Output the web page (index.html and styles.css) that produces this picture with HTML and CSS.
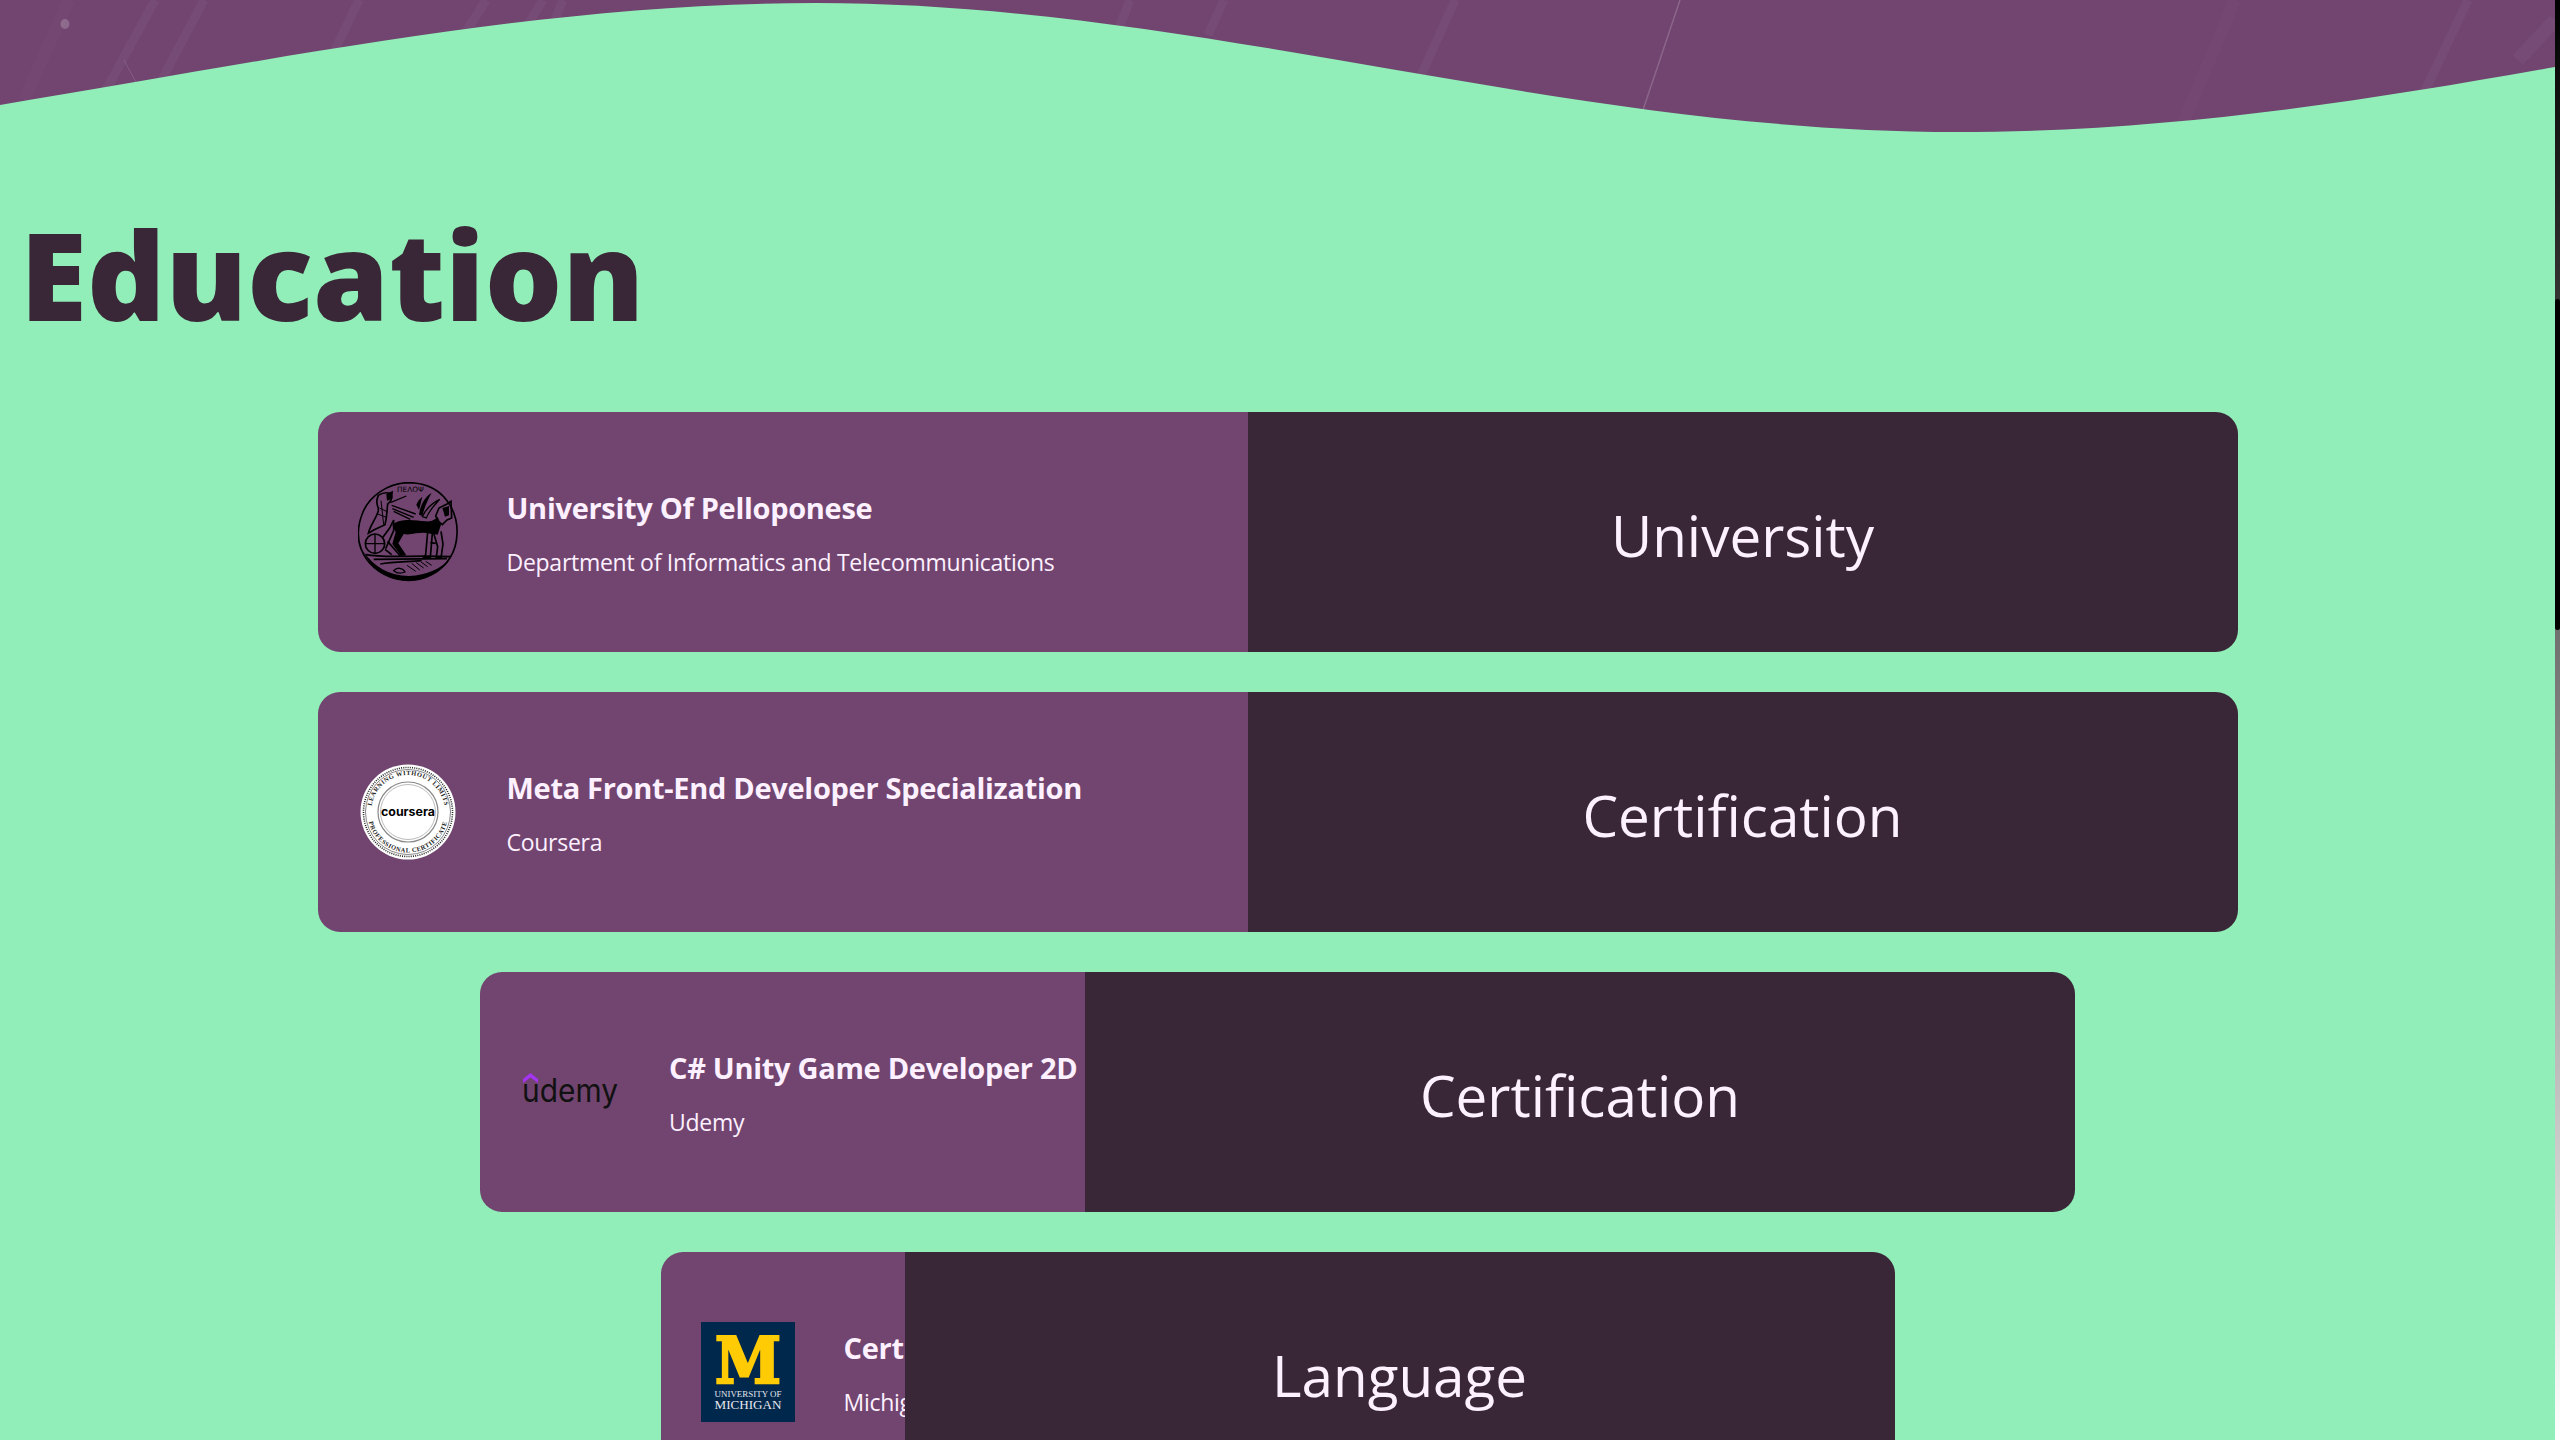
FILE: index.html
```html
<!DOCTYPE html>
<html lang="en">
<head>
  <meta charset="UTF-8">
  <meta name="viewport" content="width=device-width, initial-scale=1.0">
  <title>Education</title>
  <link rel="stylesheet" href="styles.css">
</head>
<body>
  <main class="page">
    <!-- top wave, streaks sit under the green shape -->
    <svg class="wave" viewBox="0 0 2555 140" preserveAspectRatio="none">
      <rect width="2555" height="140" fill="#714570"/>
      <g stroke="#fff" stroke-opacity="0.035" stroke-width="9">
        <path d="M155 0 L106 90"/>
        <path d="M204 0 L159 85"/>
        <path d="M359 0 L330 60"/>
        <path d="M486 0 L461 40"/>
        <path d="M543 0 L522 35"/>
        <path d="M563 0 L555 20"/>
        <path d="M1130 0 L1118 30"/>
        <path d="M1224 0 L1208 35"/>
        <path d="M1455 0 L1419 80"/>
        <path d="M2468 0 L2423 95"/>
        <path d="M2555 20 L2518 60" stroke-width="14"/>
      </g>
      <g stroke="#fff" stroke-opacity="0.015" stroke-width="12">
        <path d="M69 0 L24 100"/>
        <path d="M2235 0 L2180 130"/>
      </g>
      <path d="M1680 0 L1643 110" stroke="#fff" stroke-opacity="0.18" stroke-width="1.5"/>
      <path d="M124 60 L137 84" stroke="#fff" stroke-opacity="0.12" stroke-width="1"/>
      <ellipse cx="65" cy="24" rx="4.5" ry="5" fill="#fff" fill-opacity="0.2"/>
      <path d="M0 105 C300 55 550 3 816 3 C1200 3 1560 132 1957 132 C2170 132 2370 100 2555 67 L2555 140 L0 140 Z" fill="#92eeb8"/>
    </svg>

    <h1 class="heading">Education</h1>

    <section class="edu-list">
      <article class="edu-card">
        <div class="edu-info">
          <svg class="edu-logo" viewBox="23 22 300 300">
            <path d="M172 24 C225 24 262 40 290 78 C312 108 322 140 320 178 C318 232 292 272 246 298 C214 316 176 322 136 312 C88 300 50 268 32 222 C20 190 22 150 38 112 C58 64 112 26 172 24 Z" fill="none" stroke="#000" stroke-width="5"/>
            <path d="M40 232 C62 282 112 318 176 318 C226 318 270 296 298 256 C270 280 232 302 176 304 C116 304 72 276 40 232 Z" fill="#000"/>
            <text class="coin-text" x="140" y="52">ΠΕΛΟΨ</text>
            <!-- driver -->
            <path d="M84 62 C100 52 122 50 124 66 C126 78 116 84 112 88 L108 130 L104 150 L70 166 L54 176 C60 150 78 132 84 108 C86 92 72 90 84 62 Z" fill="none" stroke="#000" stroke-width="5"/>
            <path d="M108 58 L128 48 L126 72 L110 78 Z" fill="#000"/>
            <path d="M88 100 L112 112 M82 118 L108 128 M92 78 L100 150" stroke="#000" stroke-width="3"/>
            <path d="M120 84 L168 64 M124 92 L196 118 M126 102 L190 128 M130 110 L180 134" stroke="#000" stroke-width="4"/>
            <!-- wheel -->
            <circle cx="74" cy="207" r="29" fill="none" stroke="#000" stroke-width="5"/>
            <path d="M74 178 V236 M45 207 H103" stroke="#000" stroke-width="4"/>
            <path d="M96 190 L118 160 L130 136 L130 168 L106 222" fill="none" stroke="#000" stroke-width="5"/>
            <!-- horse -->
            <path d="M126 150 C150 130 190 136 226 140 C244 142 258 132 262 126 L272 150 L262 180 C240 176 226 172 196 176 C180 180 168 180 160 178 L144 206 L168 242 L152 244 L126 208 L136 172 C132 162 128 158 126 150 Z" fill="#000"/>
            <path d="M112 200 L150 244 M104 224 L124 240" stroke="#000" stroke-width="5"/>
            <!-- front legs and heads -->
            <path d="M232 172 L226 240 L220 248 L240 248 L246 176 Z" fill="none" stroke="#000" stroke-width="5"/>
            <path d="M250 176 L262 216 L258 248 L272 250 L278 208 L272 170 M240 204 L256 206" fill="none" stroke="#000" stroke-width="5"/>
            <path d="M256 124 L266 100 L290 88 L302 80 L304 130 L290 136 L276 150 L264 140 Z" fill="none" stroke="#000" stroke-width="5"/>
            <path d="M276 100 L296 94 L296 122 L284 126 Z" fill="#000"/>
            <!-- manes -->
            <path d="M206 120 C210 90 224 66 244 54 C232 76 222 98 216 124 Z" fill="#000"/>
            <path d="M216 126 C226 104 244 86 268 74 C250 94 236 108 228 130 Z" fill="none" stroke="#000" stroke-width="4"/>
            <path d="M198 90 C202 80 208 72 216 66 L206 106 Z" fill="#000"/>
            <!-- ground -->
            <path d="M46 240 C110 252 190 240 300 246 M70 254 L290 252 M90 268 C130 260 170 262 214 258" fill="none" stroke="#000" stroke-width="5"/>
            <path d="M130 288 C140 276 158 280 164 292 C150 298 140 296 130 288 Z" fill="none" stroke="#000" stroke-width="4"/>
            <path d="M170 272 L196 290 M184 266 L208 286 M198 264 L220 280 M212 262 L232 276 M226 260 L244 272" stroke="#000" stroke-width="3"/>
          </svg>
          <div class="edu-text">
            <h2 class="edu-title">University Of Pelloponese</h2>
            <p class="edu-sub">Department of Informatics and Telecommunications</p>
          </div>
        </div>
        <div class="edu-kind">University</div>
      </article>

      <article class="edu-card">
        <div class="edu-info">
          <svg class="edu-logo" viewBox="0 0 100 100">
            <defs>
              <path id="sealTop" d="M13 50 A37 37 0 0 1 87 50"/>
              <path id="sealBottom" d="M9.5 50 A40.5 40.5 0 0 0 90.5 50"/>
            </defs>
            <circle cx="50" cy="50" r="47.5" fill="#fff"/>
            <circle cx="50" cy="50" r="44.5" fill="none" stroke="#222" stroke-width="1.6" stroke-dasharray="1 1.2"/>
            <circle cx="50" cy="50" r="42.5" fill="none" stroke="#555" stroke-width="0.7"/>
            <circle cx="50" cy="50" r="30" fill="none" stroke="#888" stroke-width="1.2"/>
            <circle cx="50" cy="50" r="27.5" fill="none" stroke="#aaa" stroke-width="0.8"/>
            <text class="seal-ring"><textPath href="#sealTop" startOffset="50%" text-anchor="middle">LEARNING WITHOUT LIMITS</textPath></text>
            <text class="seal-ring"><textPath href="#sealBottom" startOffset="50%" text-anchor="middle">PROFESSIONAL CERTIFICATE</textPath></text>
            <text class="seal-name" x="50" y="54" textLength="54" lengthAdjust="spacingAndGlyphs">coursera</text>
          </svg>
          <div class="edu-text">
            <h2 class="edu-title">Meta Front-End Developer Specialization</h2>
            <p class="edu-sub">Coursera</p>
          </div>
        </div>
        <div class="edu-kind">Certification</div>
      </article>

      <article class="edu-card edu-card--mid">
        <div class="edu-info">
          <svg class="edu-logo" viewBox="0 0 100 100">
            <path d="M3 37 L10.500 31 L18 37 L18 41 L10.500 35.500 L3 41 Z" fill="#a435f0"/>
            <text class="udemy-name" x="2" y="60" textLength="96" lengthAdjust="spacingAndGlyphs">udemy</text>
          </svg>
          <div class="edu-text">
            <h2 class="edu-title">C# Unity Game Developer 2D</h2>
            <p class="edu-sub">Udemy</p>
          </div>
        </div>
        <div class="edu-kind">Certification</div>
      </article>

      <article class="edu-card edu-card--small">
        <div class="edu-info">
          <svg class="edu-logo edu-logo--square" viewBox="0 0 94 100">
            <rect width="94" height="100" fill="#00274c"/>
            <text class="umich-m" x="47" y="61" textLength="66" lengthAdjust="spacingAndGlyphs">M</text>
            <text class="umich-top" x="47" y="75" textLength="67" lengthAdjust="spacingAndGlyphs">UNIVERSITY OF</text>
            <text class="umich-bottom" x="47" y="87" textLength="67" lengthAdjust="spacingAndGlyphs">MICHIGAN</text>
          </svg>
          <div class="edu-text">
            <h2 class="edu-title">Certificate of Proficiency in English</h2>
            <p class="edu-sub">Michigan</p>
          </div>
        </div>
        <div class="edu-kind">Language</div>
      </article>
    </section>
  </main>

  <div class="scroll-track"><div class="scroll-thumb"></div></div>
</body>
</html>
```

FILE: styles.css
```css
html, body {
  height: 100%;
}

body {
  margin: 0;
  display: flex;
  overflow: hidden;
  background-color: #92eeb8;
  font-family: "Open Sans", "Noto Sans", Arial, sans-serif;
  color: #fdf0ff;
}

.page {
  flex: 1;
  min-width: 0;
  height: 1440px;
  overflow: hidden;
}

.wave {
  display: block;
  width: 100%;
  height: 140px;
}

.heading {
  margin: 0;
  padding: 59px 0 0 20px;
  height: 272px;
  box-sizing: border-box;
  font-size: 122px;
  line-height: 150px;
  font-weight: 800;
  color: #392737;
}

.edu-list {
  display: flex;
  flex-direction: column;
  align-items: center;
  gap: 40px;
}

.edu-card {
  display: flex;
  flex: none;
  width: 1920px;
  height: 240px;
  border-radius: 22px;
  overflow: hidden;
}

.edu-card--mid {
  width: 1595px;
}

.edu-card--small {
  width: 1234px;
}

.edu-info {
  flex: 1;
  min-width: 0;
  display: flex;
  align-items: center;
  gap: 49px;
  padding-left: 40px;
  background-color: #714570;
  overflow: hidden;
}

.edu-logo {
  flex: none;
  width: 100px;
  height: 100px;
}

.edu-logo--square {
  width: 94px;
}

.edu-text {
  flex: none;
}

.edu-title {
  margin: 0 0 20px;
  font-size: 29px;
  letter-spacing: -0.3px;
  line-height: 40px;
  font-weight: 700;
  white-space: nowrap;
}

.edu-sub {
  margin: 0;
  font-size: 23px;
  letter-spacing: -0.27px;
  line-height: 28px;
  white-space: nowrap;
}

.edu-kind {
  flex: none;
  width: 990px;
  display: flex;
  align-items: center;
  justify-content: center;
  padding-top: 6px;
  box-sizing: border-box;
  background-color: #392737;
  font-size: 56.6px;
}

.coin-text {
  font-family: "DejaVu Sans", sans-serif;
  font-size: 22px;
  fill: #000;
}

.seal-ring {
  font-family: "Liberation Serif", serif;
  font-size: 6.4px;
  font-weight: 700;
  letter-spacing: 0.5px;
  fill: #222;
}

.seal-name {
  font-family: "Inter", sans-serif;
  font-size: 12px;
  font-weight: 700;
  text-anchor: middle;
  fill: #000;
}

.udemy-name {
  font-family: "Inter", sans-serif;
  font-size: 32px;
  font-weight: 400;
  fill: #111;
}

.umich-m {
  font-family: "DejaVu Serif", serif;
  font-size: 64px;
  font-weight: 700;
  text-anchor: middle;
  fill: #ffcb05;
  stroke: #ffcb05;
  stroke-width: 2.5px;
}

.umich-top,
.umich-bottom {
  font-family: "Liberation Serif", serif;
  text-anchor: middle;
  fill: #e8e8ee;
}

.umich-top {
  font-size: 9px;
}

.umich-bottom {
  font-size: 12px;
}

.scroll-track {
  flex: none;
  width: 5px;
  height: 1440px;
  background: linear-gradient(#000, #fff);
}

.scroll-thumb {
  height: 331px;
  margin-top: 299px;
  border-radius: 3px;
  background-color: #000;
}
```
